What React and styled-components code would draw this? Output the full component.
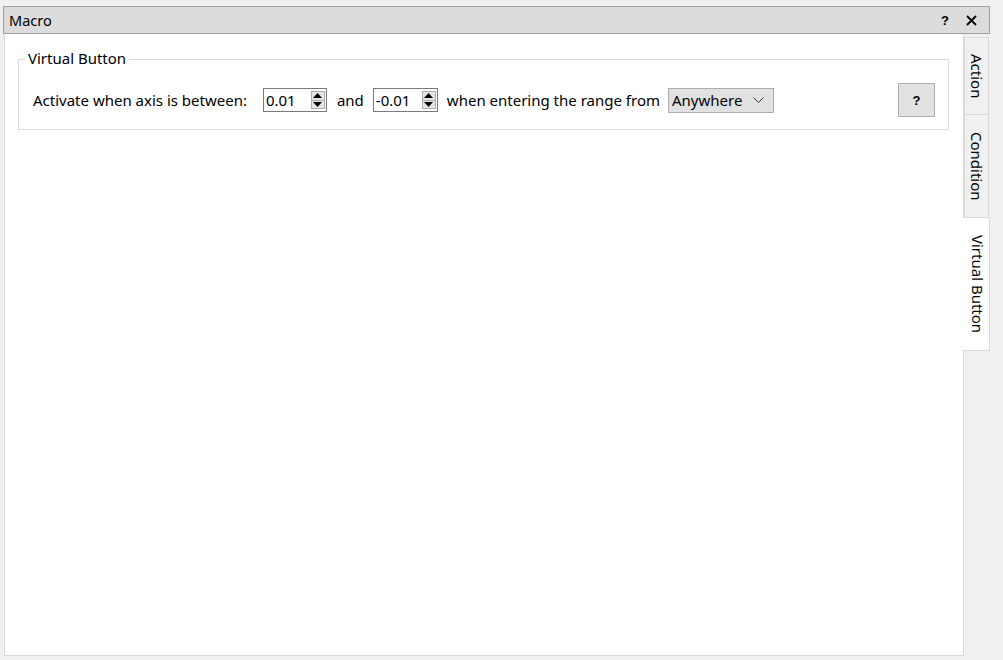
import React from "react";
import styled, { createGlobalStyle } from "styled-components";

const FONT = `"Noto Sans", "Liberation Sans", Arial, sans-serif`;

const Global = createGlobalStyle`
  html, body { margin: 0; padding: 0; background: #f0f0f0; }
  body { font-family: ${FONT}; font-size: 15px; color: #000; }
  * { box-sizing: border-box; }
`;

const Root = styled.div`
  width: 1003px;
  height: 660px;
  padding: 6px 13px 0 3px;
  background: #f0f0f0;
  overflow: hidden;
`;

const TitleBar = styled.div`
  height: 28px;
  border: 1px solid #a0a0a0;
  background: #dcdcdc;
  display: flex;
  align-items: center;
  padding: 0 5px 0 5px;
  font-size: 14.5px;
`;

const Title = styled.span`
  flex: 1;
`;

const TitleButton = styled.button`
  border: 0;
  background: transparent;
  padding: 0;
  width: 26px;
  height: 20px;
  display: flex;
  align-items: center;
  justify-content: center;
  font: bold 13px "Liberation Sans", Arial, sans-serif;
  color: #000;
`;

const Main = styled.div`
  display: flex;
  margin-left: 1px;
`;

const Pane = styled.div`
  width: 960px;
  height: 622px;
  background: #fff;
  border: 1px solid #d9d9d9;
  border-top: 0;
  padding: 16px 14px 0 13px;
`;

const TabColumn = styled.div`
  display: flex;
  flex-direction: column;
  padding-top: 3px;
`;

const Tab = styled.div`
  width: ${(p) => (p.$active ? "27px" : "25px")};
  height: ${(p) => p.$h}px;
  margin-left: ${(p) => (p.$active ? "-1px" : "0")};
  background: ${(p) => (p.$active ? "#fff" : "#f0f0f0")};
  border: 1px solid #d9d9d9;
  border-left: ${(p) => (p.$active ? "0" : "1px solid #d9d9d9")};
  border-top: ${(p) => (p.$first ? "1px solid #d9d9d9" : "0")};
  writing-mode: vertical-rl;
  display: flex;
  align-items: center;
  justify-content: center;
  font-size: 15px;
  line-height: 1;
  padding-left: ${(p) => (p.$active ? "2px" : "0")};
`;

const Group = styled.fieldset`
  margin: 0;
  border: 1px solid #dcdcdc;
  padding: 15px 13px 12px 14px;
`;

const Legend = styled.legend`
  padding: 0 3px 1px;
  margin-left: -8px;
  line-height: 17px;
  font-size: 15px;
`;

const Row = styled.div`
  display: flex;
  align-items: center;
  height: 34px;
`;

const Label = styled.span`
  margin-right: ${(p) => p.$mr || 0}px;
  white-space: nowrap;
  padding-bottom: 1px;
`;

const SpinBox = styled.div`
  width: ${(p) => p.$w}px;
  height: 24px;
  border: 1px solid #7a7a7a;
  background: #fff;
  display: flex;
  align-items: center;
  padding: 0 1px 0 2px;
  margin-right: ${(p) => p.$mr || 0}px;
`;

const SpinText = styled.span`
  flex: 1;
`;

const SpinButtons = styled.div`
  display: flex;
  flex-direction: column;
  width: 14px;
  height: 18px;
  border: 1px solid #adadad;
  background: #e5e5e5;
`;

const SpinHalf = styled.div`
  flex: 1;
  display: flex;
  align-items: center;
  justify-content: center;
  & + & { border-top: 1px solid #adadad; }
`;

const Combo = styled.div`
  width: 106px;
  height: 25px;
  background: #e1e1e1;
  border: 1px solid #adadad;
  display: flex;
  align-items: center;
  padding: 0 9px 1px 3px;
  justify-content: space-between;
`;

const HelpButton = styled.button`
  margin-left: auto;
  width: 37px;
  height: 34px;
  background: #e1e1e1;
  border: 1px solid #adadad;
  font: bold 13px "Liberation Sans", Arial, sans-serif;
  color: #000;
  padding: 0;
`;

const Arrow = ({ up }) => (
  <svg width="9" height="5" viewBox="0 0 9 5">
    <path d={up ? "M0 5 L4.5 0 L9 5 Z" : "M0 0 L4.5 5 L9 0 Z"} fill="#000" />
  </svg>
);

const Spin = ({ value, w, mr }) => (
  <SpinBox $w={w} $mr={mr}>
    <SpinText>{value}</SpinText>
    <SpinButtons>
      <SpinHalf><Arrow up /></SpinHalf>
      <SpinHalf><Arrow /></SpinHalf>
    </SpinButtons>
  </SpinBox>
);

const Close = () => (
  <svg width="11" height="11" viewBox="0 0 11 11">
    <path d="M1 1 L10 10 M10 1 L1 10" stroke="#000" strokeWidth="1.8" />
  </svg>
);

const Chevron = () => (
  <svg width="11" height="6" viewBox="0 0 11 6">
    <path d="M0.5 0.5 L5.5 5.5 L10.5 0.5" stroke="#333" strokeWidth="1" fill="none" />
  </svg>
);

export default function App() {
  return (
    <>
      <Global />
      <Root>
        <TitleBar>
          <Title>Macro</Title>
          <TitleButton>?</TitleButton>
          <TitleButton><Close /></TitleButton>
        </TitleBar>
        <Main>
          <Pane>
            <Group>
              <Legend>Virtual Button</Legend>
              <Row>
                <Label $mr={16}>Activate when axis is between:</Label>
                <Spin value="0.01" w={64} mr={10} />
                <Label $mr={9}>and</Label>
                <Spin value="-0.01" w={65} mr={9} />
                <Label $mr={8}>when entering the range from</Label>
                <Combo>
                  <span>Anywhere</span>
                  <Chevron />
                </Combo>
                <HelpButton>?</HelpButton>
              </Row>
            </Group>
          </Pane>
          <TabColumn>
            <Tab $h={78} $first>Action</Tab>
            <Tab $h={103}>Condition</Tab>
            <Tab $h={133} $active>Virtual Button</Tab>
          </TabColumn>
        </Main>
      </Root>
    </>
  );
}
